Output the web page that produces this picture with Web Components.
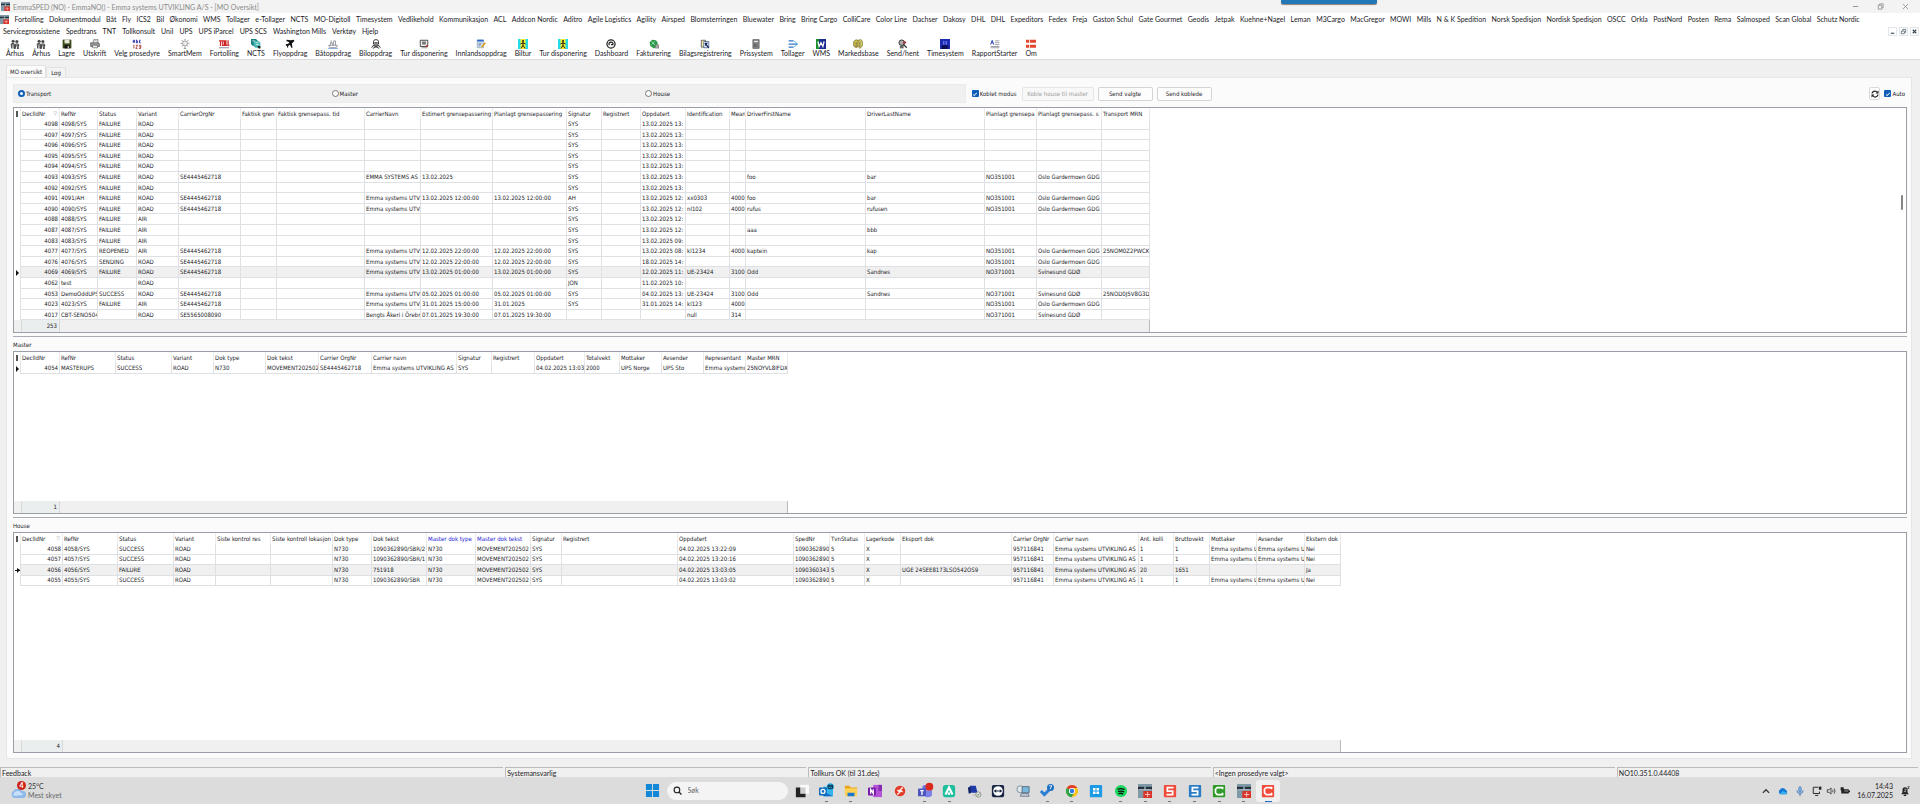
<!DOCTYPE html>
<html lang="no">
<head>
<meta charset="utf-8">
<title>EmmaSPED (NO)</title>
<style>
	html,
	body {
		margin: 0;
		height: 100%;
	}
	body {
		--ui: Lato, "Liberation Sans", sans-serif;
		--grid: "DejaVu Sans Condensed", "Liberation Sans", sans-serif;
		font: 7px/10px var(--ui);
		color: #1b1b1f;
		background: #f0f0f0;
		overflow: hidden;
	}
</style>
</head>
<body>
<emma-app></emma-app>

<script>
const ICONS = {
	emma: `<path fill="#7f9aa6" d="M0 0h16v16H0z"/><path fill="#26303c" d="M0 3h7v3H0zM9 3h7v3H9z"/><path fill="#fff" d="M1 6h14v1H1z" opacity=".5"/><path fill="#d8342c" d="M6 8h10v8H6z"/><path stroke="#f6c9c4" d="M8 12h6M11 9v6"/>`,
	people: `<g fill="#4a4a4a"><circle cx="5" cy="3.500" r="2.500"/><circle cx="11" cy="4" r="2.500"/><path d="M1 8l3-2 3 1 1 2 1-2 4 0 2 3-1 2v4h-3v-4l-1-1-1 5H6l-1-5-1 1v3H2z"/></g><path stroke="#ddd" fill="none" d="M5 8v5M11 8v6M3 9l1 3"/>`,
	save: `<path fill="#3b4a1c" d="M1 1h14v14H1z"/><path fill="#e8e8d8" d="M4 1h8v6H4z"/><path fill="#111" d="M4 10h8v5H4z"/><path fill="#ccc" d="M9 11h2v4H9z"/>`,
	print: `<path fill="#fff" stroke="#555" d="M5 6l1-5h7l-1 5"/><path fill="#9a9a9a" stroke="#444" d="M1 6h13l1 2v4H1z"/><path fill="#eee" stroke="#555" d="M4 10h8v4H4z"/><path stroke="#777" d="M7 3h4"/>`,
	abc: `<path stroke="#33a" stroke-width="1.500" fill="none" d="M2 6V2h2v4M2 4h2M7 1v5h2V3H7M14 2h-2v4h2"/><path stroke="#a44" stroke-width="1.500" fill="none" d="M3 9v6M6 10h3l-3 5h3M11 10h3v5h-3M11 12.500h3"/>`,
	gear: `<circle cx="8" cy="7" r="4" fill="#eee" stroke="#777"/><path stroke="#888" stroke-width="1.500" d="M8 0v2M8 12v2M1 7h2M13 7h2M3 2l2 2M13 2l-2 2M3 12l2-2M13 12l-2-2M6 15h4"/>`,
	toll: `<path stroke="#c22" stroke-width="2" fill="none" d="M0 3h5M2.500 3v8M6 3h3v7H6zM11 2v8h2M14.500 2v8h2"/><path stroke="#446" d="M0 14h16"/>`,
	ncts: `<path fill="#168080" d="M0 0h8l3 3v8H3L0 8z"/><path fill="#49b8b0" d="M4 3h8l3 3v8H7l-3-3z"/><path stroke="#fff" d="M2 3h5M7 6h5M8 9h5"/><path fill="#222" d="M10 11h5v4h-3z"/>`,
	plane: `<path fill="#111" d="M14 1l1 2-4 4 1 7-2 0-2-5-3 2v3H4l-1-3-2-1 1-2h3l2-3-5-2 1-2 6 1z"/>`,
	boat: `<path fill="none" stroke="#667" d="M1 10h14l-2 4H3zM4 10V6h3v4M9 10V3h3v7M5 6V2"/><path stroke="#47c" d="M0 15h16"/>`,
	truck: `<path fill="none" stroke="#333" stroke-width="1.500" d="M4 8V4q0-3 4-3t4 3v4zM5 6h6M1 14l3-4h8l3 4M3 10l10 5M13 10L3 15"/>`,
	screen: `<path fill="#eee" stroke="#444" stroke-width="1.500" d="M2 2h12v10H2z"/><path fill="#777" d="M5 4h6v5H5z"/><path fill="#b33" d="M11 10h3v3h-3z"/><path stroke="#555" d="M4 14h9"/>`,
	note: `<path fill="#cfe2f3" stroke="#79a" d="M2 2h10v12H2z"/><path fill="#36c" d="M2 1h10v3H2z"/><path stroke="#678" d="M4 7h5M4 9h4M4 11h3"/><path stroke="#e59a20" stroke-width="2.500" d="M15 6l-6 7"/>`,
	runner: `<path fill="#22dce8" d="M0 0h16v16H0z"/><path fill="#fff12b" d="M4 0h8v16H4z"/><circle cx="8" cy="3" r="1.500"/><path stroke="#111" stroke-width="1.500" fill="none" d="M8 5v5l-3 5M8 10l3 5M4 8l4-2 4 2"/>`,
	dash: `<circle cx="8" cy="8" r="6.500" fill="#fff" stroke="#222" stroke-width="2"/><path fill="none" stroke="#222" stroke-width="2" d="M5 10q-1-5 3-5t3 4l-3 0"/>`,
	invoice: `<path fill="#2f9a4a" d="M1 5l4-4 6 1 3 4-1 6-5 3-6-4z"/><path stroke="#bfe" fill="none" d="M4 4l6 6M4 9l5-5"/><path fill="#777" d="M10 9h6v6h-6z"/><path stroke="#eee" d="M11 11h4M11 13h4"/>`,
	clip: `<path fill="#f4e8a8" stroke="#222" d="M2 2h7v11H2z"/><path fill="#e8eefc" stroke="#247" d="M6 4h8v10H6z"/><path stroke="#125" stroke-width="2" d="M8 7l6 7"/><path fill="#125" d="M8 6l5 0-5 5z"/>`,
	calc: `<path fill="#888" stroke="#444" d="M3 1h10v14H3z"/><path fill="#e8efe8" d="M5 3h6v2H5z"/><path stroke="#222" stroke-dasharray="1 1" d="M5 8h6M5 10h6M5 12h6"/>`,
	list: `<path stroke="#2f74c0" stroke-width="2" d="M1 3h8M1 8h14M1 13h8"/><path fill="none" stroke="#49a7d8" stroke-width="1.500" d="M10 3l5 5-5 5"/>`,
	wms: `<path fill="#1c2c90" d="M0 0h16v16H0z"/><path fill="#1a8f30" d="M0 0h5v16H0z"/><path fill="none" stroke="#fff" stroke-width="2" d="M3 4l2 8 3-6 3 6 2-8"/>`,
	market: `<path fill="#cfc24a" stroke="#665c10" d="M1 4l4-3 4 2v8l-4 3-4-3z"/><path fill="#d8cf6a" stroke="#665c10" d="M8 2l5-1 2 3v7l-4 4-3-3z"/><path stroke="#445" d="M5 5v8M11 4v9"/>`,
	send: `<circle cx="6" cy="6" r="4.500" fill="#aaa" stroke="#333" stroke-width="1.500"/><path stroke="#333" stroke-width="2" d="M8 8l6 6"/><path fill="#a33" d="M8 4h5v3H8z"/><path fill="#666" d="M3 11h6v4H3z"/>`,
	time: `<path fill="#1c2bb0" d="M0 0h16v16H0z"/><path fill="#0a0f50" d="M3 10h10v6H3z"/><path fill="#6d7bf0" d="M5 3h2v6H5zM9 3h2v6H9z"/>`,
	report: `<path stroke="#2a3fb0" stroke-width="1.500" fill="none" d="M1 9l2.500-7L6 9M2 6h3"/><path stroke="#667" d="M8 3h7M8 6h7M8 9h7M1 12h14M1 14h14"/>`,
	om: `<path fill="#e2452d" d="M0 1h5v5H0zM6 1h10v5H6zM0 9h5v5H0zM6 9h10v5H6z"/><path stroke="#fff" d="M0 7.500h16M5.500 0v16" opacity=".7"/>`,
	refresh: `<path fill="none" stroke="#222" stroke-width="2.500" d="M2 7q1-5 6-5 3 0 5 3M14 9q-1 5-6 5-3 0-5-3"/><path fill="#222" d="M15 1v6H9zM1 15V9h6z"/>`,
	min: `<path stroke="#666" stroke-width="1.500" d="M2 8h12"/>`,
	restore: `<path fill="none" stroke="#777" stroke-width="1.500" d="M3 5h8v9H3zM6 5V2h8v9h-3"/>`,
	close: `<path stroke="#777" stroke-width="1.500" d="M2 2l12 12M14 2L2 14"/>`,
	mdiMin: `<path stroke="#345" stroke-width="2.500" d="M4 12h8"/>`,
	mdiRestore: `<path fill="none" stroke="#345" stroke-width="1.500" d="M3 7h7v6H3zM6 6V3h7v7h-2"/>`,
	mdiClose: `<path stroke="#345" stroke-width="2.500" d="M4 4l8 8M12 4l-8 8"/>`,
	weather: `<path fill="#8cb8ea" d="M4 15a4 4 0 0 1-.500-7A5 5 0 0 1 12 8a3.500 3.500 0 0 1 1 7z"/><path fill="#c9defa" d="M4 13a3 3 0 0 1 1-4 4 4 0 0 1 6 1q2 0 2 2z"/>`,
	windows: `<path fill="#1488d8" d="M1 1h6.500v6.500H1zM8.500 1H15v6.500H8.500zM1 8.500h6.500V15H1zM8.500 8.500H15V15H8.500z"/>`,
	search: `<circle cx="7" cy="7" r="5" fill="none" stroke="#222" stroke-width="2"/><path stroke="#222" stroke-width="2.200" d="M11 11l4 4"/>`,
	taskview: `<path fill="#fafafa" d="M6 1h10v10H6z"/><path fill="#222" d="M1 4h5v7h6v4H1z"/><path fill="#8a8a8a" d="M6 4h6v7H6z" opacity=".4"/>`,
	outlook: `<path fill="#36b5ec" d="M5 3h11v11H5z"/><path fill="#1568c0" d="M5 9l11 5H5z"/><rect y="4" width="9" height="9" rx="1" fill="#0f6cbd"/><circle cx="4.500" cy="8.500" r="2.300" fill="none" stroke="#fff" stroke-width="1.500"/><circle cx="13" cy="3" r="4" fill="#1ea7e0"/><path fill="none" stroke="#123" d="M10.500 1.500h5v3.500h-5zM10.500 2l2.500 1.500L15.500 2"/>`,
	explorer: `<path fill="#e8a51c" d="M1 2h5l2 2h7v3H1z"/><path fill="#ffd257" d="M1 5h14v9H1z"/><path fill="#1a78d0" d="M4 10h8v4H4z"/>`,
	onenote: `<path fill="#b455d8" d="M6 1h10v14H6z"/><path fill="#8a2bb5" d="M12 1h4v7h-4z"/><rect y="4" width="9" height="9" rx="1" fill="#7719aa"/><path fill="none" stroke="#fff" stroke-width="1.500" d="M3 11V6l3 5V6"/>`,
	remote: `<circle cx="8" cy="8" r="6" fill="#e23b2a"/><path fill="none" stroke="#fff" stroke-width="1.500" d="M5 7l3 2-3 3M11 4L8 7l3 2"/>`,
	teams: `<circle cx="8" cy="4" r="3" fill="#6b74e0"/><path fill="#7b83eb" d="M5 7h11v6q-3 3-7 2z"/><rect y="5" width="9" height="9" rx="1" fill="#4b53bc"/><path stroke="#fff" stroke-width="1.500" d="M2.500 7.500h4M4.500 7.500v5"/><circle cx="13" cy="3" r="4.500" fill="#d92a1c"/>`,
	arrowup: `<rect x="1" y="1" width="14" height="14" rx="3" fill="#1bbf9c"/><path fill="none" stroke="#fff" stroke-width="2.500" d="M4 12l4-8 4 8"/><circle cx="8" cy="11" r="1.500" fill="#fff"/>`,
	pc: `<path fill="#1e3aa8" d="M3 2h7l2 8H5z"/><path fill="#122268" d="M1 4l3-1 1 7-3 1z"/><path fill="#ccc" d="M6 11h6l2 3H7z"/><circle cx="13" cy="12" r="3" fill="#e6e6e6" stroke="#888"/><path stroke="#2a8a2a" fill="none" d="M11.500 12l1 1 2-2"/>`,
	teamviewer: `<rect x="1" y="1" width="14" height="14" rx="2" fill="#1a2744"/><circle cx="8" cy="8" r="5.500" fill="#fff"/><path fill="#1a2744" d="M3 8l3-2v1.300h4V6l3 2-3 2V8.700H6V10z"/>`,
	netpc: `<circle cx="5" cy="6" r="4" fill="#dfe6ea" stroke="#789"/><path fill="#78b8dc" stroke="#567" d="M7 3h8v7H7z"/><path fill="#ccd" stroke="#678" d="M6 11h8l1 3H5z"/>`,
	todo: `<path fill="none" stroke="#2a7fd4" stroke-width="3.500" d="M1 8l4 4 8-8"/><circle cx="12" cy="4" r="4" fill="#1d6fc4"/><path stroke="#fff" fill="none" d="M10.500 2h3l-2 4"/>`,
	chrome: `<circle cx="8" cy="8" r="7" fill="#fbc116"/><path fill="#e33b2e" d="M8 8L2 4.500A7 7 0 0 1 14 4.500H8z"/><path fill="#2ba24c" d="M8 8L2 4.500A7 7 0 0 0 7.500 15l3-5z"/><circle cx="8" cy="8" r="3.500" fill="#fff"/><circle cx="8" cy="8" r="2.600" fill="#2f7de1"/>`,
	store: `<rect x="1" y="1" width="14" height="14" rx="1" fill="#1b9be6"/><path fill="#fff" d="M4.500 4.500h3v3h-3zM8.500 4.500h3v3h-3zM4.500 8.500h3v3h-3zM8.500 8.500h3v3h-3z"/>`,
	spotify: `<circle cx="8" cy="8" r="7" fill="#1ed760"/><path fill="none" stroke="#111" stroke-width="1.500" d="M4 6q4-1.500 8 .5M4.500 8.500q4-1 7 .5M5 11q3-1 5.500.5"/>`,
	snagitRed: `<rect x="1" y="1" width="14" height="14" rx="1" fill="#f04a3a"/><path fill="none" stroke="#fff" stroke-width="2" d="M12 4H5v4h6v4H4"/>`,
	snagitBlue: `<rect x="1" y="1" width="14" height="14" rx="1" fill="#2b7cc4"/><path fill="none" stroke="#fff" stroke-width="2" d="M12 4H5v4h6v4H4"/>`,
	camGreen: `<rect x="1" y="1" width="14" height="14" rx="1" fill="#2f9a2a"/><path fill="none" stroke="#fff" stroke-width="2" d="M12 6V4H6L4 6v4l2 2h6v-2"/>`,
	camRed: `<rect x="1" y="1" width="14" height="14" rx="1" fill="#f04a3a"/><path fill="none" stroke="#fff" stroke-width="2" d="M12 6V4H6L4 6v4l2 2h6v-2"/>`,
	chevron: `<path fill="none" stroke="#333" stroke-width="2" d="M3 11l5-5 5 5"/>`,
	cloud: `<path fill="#1479d0" d="M4 13a4 4 0 0 1-1-7A5 5 0 0 1 12 6a4 4 0 0 1 1 7z"/><path fill="#38b0ee" d="M2 13l6-5 7 3-1 2z"/>`,
	mic: `<rect x="6" y="1" width="4" height="9" rx="2" fill="#7fb0e0" stroke="#3a76b8"/><path fill="none" stroke="#3a76b8" stroke-width="1.500" d="M3 7q0 5 5 5t5-5M8 12v4"/>`,
	monitor: `<path fill="none" stroke="#222" stroke-width="1.500" d="M10 2H2v10h10V9M5 15h5"/><path fill="#222" d="M11 1h4v5h-4z"/>`,
	speaker: `<path fill="none" stroke="#333" stroke-width="1.300" d="M2 6h3l3-3v10L5 10H2zM10.500 6q1.500 2 0 4M13 4q3 4 0 8"/>`,
	battery: `<path fill="#222" d="M2 5h12v7H2zM14 7h2v3h-2z"/><path fill="#222" d="M1 2h5v5H1z"/><path stroke="#ddd" d="M7 8h6" />`,
	bell: `<path fill="#222" d="M2 13l2-3V5q0-3 4-3t4 3v5l2 3zM6 14h4v2H6z"/><path stroke="#ddd" fill="none" d="M7 5h3l-3 4h3"/><path stroke="#222" fill="none" d="M12 1h3l-3 3h3"/>`,
};

const MENU_ROWS = [
	["Fortolling", "Dokumentmodul", "Båt", "Fly", "ICS2", "Bil", "Økonomi", "WMS", "Tollager", "e-Tollager", "NCTS", "MO-Digitoll", "Timesystem", "Vedlikehold", "Kommunikasjon", "ACL", "Addcon Nordic", "Aditro", "Agile Logistics", "Agility", "Airsped", "Blomsterringen", "Bluewater", "Bring", "Bring Cargo", "ColliCare", "Color Line", "Dachser", "Dakosy", "DHL", "DHL", "Expeditors", "Fedex", "Freja", "Gaston Schul", "Gate Gourmet", "Geodis", "Jetpak", "Kuehne+Nagel", "Leman", "M3Cargo", "MacGregor", "MOWI", "Mills", "N & K Spedition", "Norsk Spedisjon", "Nordisk Spedisjon", "OSCC", "Orkla", "PostNord", "Posten", "Rema", "Salmosped", "Scan Global", "Schutz Nordic"],
	["Servicegrossistene", "Spedtrans", "TNT", "Tollkonsult", "Unil", "UPS", "UPS iParcel", "UPS SCS", "Washington Mills", "Verktøy", "Hjelp"],
];

const TOOLS = [
	["people", "Århus"], ["people", "Århus"], ["save", "Lagre"], ["print", "Utskrift"],
	["abc", "Velg prosedyre"], ["gear", "SmartMem"], ["toll", "Fortolling"], ["ncts", "NCTS"],
	["plane", "Flyoppdrag"], ["boat", "Båtoppdrag"], ["truck", "Biloppdrag"],
	["screen", "Tur disponering"], ["note", "Innlandsoppdrag"], ["runner", "Biltur"],
	["runner", "Tur disponering"], ["dash", "Dashboard"], ["invoice", "Fakturering"],
	["clip", "Bilagsregistrering"], ["calc", "Prissystem"], ["list", "Tollager"],
	["wms", "WMS"], ["market", "Markedsbase"], ["send", "Send/hent"],
	["time", "Timesystem"], ["report", "RapportStarter"], ["om", "Om"],
];

// name of the app, icon, running or not
const APPS = [
	["Oppgavevisning", "taskview", 0], ["Outlook", "outlook", 1], ["Filutforsker", "explorer", 1],
	["OneNote", "onenote", 0], ["Remote", "remote", 0], ["Teams", "teams", 1],
	["Assistent", "arrowup", 1], ["Eksternt skrivebord", "pc", 0], ["TeamViewer", "teamviewer", 0],
	["Nettverk", "netpc", 0], ["To Do", "todo", 1], ["Chrome", "chrome", 1], ["Store", "store", 0],
	["Spotify", "spotify", 1], ["EmmaSPED", "emma", 1], ["Snagit", "snagitRed", 1],
	["Snagit Editor", "snagitBlue", 1], ["Camtasia", "camGreen", 1], ["EmmaSPED 2", "emma", 1],
	["Camtasia Recorder", "camRed", 2],
];

const GRIDS = {
	transport: {
		columns: [["DeclIdNr", 39, "sort"], ["RefNr", 38], ["Status", 39], ["Variant", 42], ["CarrierOrgNr", 62], ["Faktisk gren", 36], ["Faktisk grensepass. tid", 88], ["CarrierNavn", 56], ["Estimert grensepassering", 72], ["Planlagt grensepassering", 74], ["Signatur", 35], ["Registrert", 39], ["Oppdatert", 45], ["Identification", 44], ["Mean", 16], ["DriverFirstName", 120], ["DriverLastName", 119], ["Planlagt grensepa", 52], ["Planlagt grensepass. s", 65], ["Transport MRN", 48]],
		rows: [
			"4098|4098/SYS|FAILURE|ROAD|||||||SYS||13.02.2025 13:",
			"4097|4097/SYS|FAILURE|ROAD|||||||SYS||13.02.2025 13:",
			"4096|4096/SYS|FAILURE|ROAD|||||||SYS||13.02.2025 13:",
			"4095|4095/SYS|FAILURE|ROAD|||||||SYS||13.02.2025 13:",
			"4094|4094/SYS|FAILURE|ROAD|||||||SYS||13.02.2025 13:",
			"4093|4093/SYS|FAILURE|ROAD|SE4445462718|||EMMA SYSTEMS AS|13.02.2025||SYS||13.02.2025 13:|||foo|bar|NO351001|Oslo Gardermoen GDG",
			"4092|4092/SYS|FAILURE|ROAD|||||||SYS||13.02.2025 13:",
			"4091|4091/AH|FAILURE|ROAD|SE4445462718|||Emma systems UTVI|13.02.2025 12:00:00|13.02.2025 12:00:00|AH||13.02.2025 12:|xx0303|4000|foo|bar|NO351001|Oslo Gardermoen GDG",
			"4090|4090/SYS|FAILURE|ROAD|SE4445462718|||Emma systems UTVI|||SYS||13.02.2025 12:|nl102|4000|rufus|rufusen|NO351001|Oslo Gardermoen GDG",
			"4088|4088/SYS|FAILURE|AIR|||||||SYS||13.02.2025 12:",
			"4087|4087/SYS|FAILURE|AIR|||||||SYS||13.02.2025 12:|||aaa|bbb",
			"4083|4083/SYS|FAILURE|AIR|||||||SYS||13.02.2025 09:",
			"4077|4077/SYS|REOPENED|AIR|SE4445462718|||Emma systems UTVI|12.02.2025 22:00:00|12.02.2025 22:00:00|SYS||13.02.2025 08:|kl1234|4000|kaptein|kap|NO351001|Oslo Gardermoen GDG|25NOM0Z2PWCK",
			"4076|4076/SYS|SENDING|ROAD|SE4445462718|||Emma systems UTVI|12.02.2025 22:00:00|12.02.2025 22:00:00|SYS||18.02.2025 14:|||||NO351001|Oslo Gardermoen GDG",
			"4069|4069/SYS|FAILURE|ROAD|SE4445462718|||Emma systems UTVI|13.02.2025 01:00:00|13.02.2025 01:00:00|SYS||12.02.2025 11:|UE-23424|3100|Odd|Sandnes|NO371001|Svinesund GDØ",
			"4062|test||ROAD|||||||JON||11.02.2025 10:",
			"4053|DemoOddUPS|SUCCESS|ROAD|SE4445462718|||Emma systems UTVI|05.02.2025 01:00:00|05.02.2025 01:00:00|SYS||04.02.2025 13:|UE-23424|3100|Odd|Sandnes|NO371001|Svinesund GDØ|25NOD0J5V8G3D",
			"4023|4023/SYS|FAILURE|AIR|SE4445462718|||Emma systems UTVI|31.01.2025 15:00:00|31.01.2025|SYS||31.01.2025 14:|kl123|4000|||NO351001|Oslo Gardermoen GDG",
			"4017|CBT-SENO504||ROAD|SE5565008090|||Bengts Åkeri i Örebr|07.01.2025 19:30:00|07.01.2025 19:30:00||||null|314|||NO371001|Svinesund GDØ",
		],
		current: 14,
		shaded: true,
		total: 253,
	},
	master: {
		columns: [["DeclIdNr", 39], ["RefNr", 56], ["Status", 56], ["Variant", 42], ["Dok type", 52], ["Dok tekst", 53], ["Carrier OrgNr", 53], ["Carrier navn", 85], ["Signatur", 35], ["Registrert", 43], ["Oppdatert", 50], ["Totalvekt", 35], ["Mottaker", 42], ["Avsender", 42], ["Representant", 42], ["Master MRN", 42]],
		rows: [
			"4054|MASTERUPS|SUCCESS|ROAD|N730|MOVEMENT202502|SE4445462718|Emma systems UTVIKLING AS|SYS||04.02.2025 13:03|2000|UPS Norge|UPS Sto|Emma systems|25NOYVL8IFDX",
		],
		current: 0,
		total: 1,
	},
	house: {
		columns: [["DeclIdNr", 42, "sort"], ["RefNr", 55], ["Status", 56], ["Variant", 42], ["Siste kontrol res", 55], ["Siste kontroll lokasjon", 62], ["Dok type", 39], ["Dok tekst", 55], ["Master dok type", 49, "link"], ["Master dok tekst", 55, "link"], ["Signatur", 31], ["Registrert", 116], ["Oppdatert", 116], ["SpedNr", 36], ["TvnStatus", 35], ["Lagerkode", 36], ["Eksport dok", 111], ["Carrier OrgNr", 42], ["Carrier navn", 85], ["Ant. kolli", 35], ["Bruttovekt", 36], ["Mottaker", 47], ["Avsender", 48], ["Ekstern dok", 36]],
		rows: [
			"4058|4058/SYS|SUCCESS|ROAD|||N730|1090362890/SBR/2|N730|MOVEMENT202502|SYS||04.02.2025 13:22:09|1090362890|5|X||957116841|Emma systems UTVIKLING AS|1|1|Emma systems U|Emma systems U|Nei",
			"4057|4057/SYS|SUCCESS|ROAD|||N730|1090362890/SBR/1|N730|MOVEMENT202502|SYS||04.02.2025 13:20:16|1090362890|5|X||957116841|Emma systems UTVIKLING AS|1|1|Emma systems U|Emma systems U|Nei",
			"4056|4056/SYS|FAILURE|ROAD|||N730|751918|N730|MOVEMENT202502|SYS||04.02.2025 13:03:05|1090360343|5|X|UGE 24SEE8173LSO542OS9|957116841|Emma systems UTVIKLING AS|20|1651|||Ja",
			"4055|4055/SYS|SUCCESS|ROAD|||N730|1090362890/SBR|N730|MOVEMENT202502|SYS||04.02.2025 13:03:02|1090362890|5|X||957116841|Emma systems UTVIKLING AS|1|1|Emma systems U|Emma systems U|Nei",
		],
		current: 2,
		shaded: true,
		marker: "arrow",
		total: 4,
	},
};

const BUTTON_RESET = `
	button {
		appearance: none;
		margin: 0;
		padding: 0;
		border: 0;
		background: none;
		color: inherit;
		font: inherit;
		white-space: nowrap;
	}
`;

function define(name, html) {
	customElements.define(
		name,
		class extends HTMLElement {
			constructor() {
				super();
				this.attachShadow({ mode: "open" });
			}

			connectedCallback() {
				this.shadowRoot.innerHTML = typeof html === "function" ? html(this) : html;
			}
		},
	);
}

define("emma-icon", (el) => `
	<style>
		:host { display: block; flex: none; width: var(--size, 10px); height: var(--size, 10px); }
		svg { display: block; width: 100%; height: 100%; overflow: visible; }
	</style>
	<svg viewBox="0 0 16 16" aria-hidden="true">${ICONS[el.getAttribute("name")] || ""}</svg>
`);

define("title-bar", `
	<style>
		${BUTTON_RESET}
		:host { display: flex; align-items: center; height: 13px; background: #f3f3f3; color: #8a8a8a; padding-left: 1px; }
		emma-icon { --size: 9px; }
		.caption { flex: 1; padding-left: 3px; }
		.controls { display: flex; gap: 18px; padding-right: 11px; }
		.controls emma-icon { --size: 7px; }
	</style>
	<emma-icon name="emma"></emma-icon>
	<span class="caption"><slot></slot></span>
	<div class="controls">
		<button aria-label="Minimer"><emma-icon name="min"></emma-icon></button>
		<button aria-label="Gjenopprett"><emma-icon name="restore"></emma-icon></button>
		<button aria-label="Lukk"><emma-icon name="close"></emma-icon></button>
	</div>
`);

define("menu-bar", `
	<style>
		${BUTTON_RESET}
		:host { display: block; background: #fff; }
		nav { display: flex; align-items: center; height: 12px; }
		.first { justify-content: space-between; padding-right: 60px; }
		.second { gap: 6px; padding: 0 1px 0 3px; }
		emma-icon { --size: 9px; }
		.mdi { display: flex; gap: 2px; margin-left: auto; }
		.mdi emma-icon { --size: 7px; border: 1px solid #e2e6ea; }
	</style>
	<nav class="first">
		<emma-icon name="emma"></emma-icon>
		${MENU_ROWS[0].map((text) => `<button>${text.replace("&", "&amp;")}</button>`).join("")}
	</nav>
	<nav class="second">
		${MENU_ROWS[1].map((text) => `<button>${text}</button>`).join("")}
		<div class="mdi">
			<button aria-label="Minimer vindu"><emma-icon name="mdiMin"></emma-icon></button>
			<button aria-label="Gjenopprett vindu"><emma-icon name="mdiRestore"></emma-icon></button>
			<button aria-label="Lukk vindu"><emma-icon name="mdiClose"></emma-icon></button>
		</div>
	</nav>
`);

define("tool-bar", `
	<style>
		${BUTTON_RESET}
		:host { display: flex; gap: 8px; height: 22px; padding-left: 6px; background: #fff; border-bottom: 1px solid #dcdcdc; }
		button { display: flex; flex-direction: column; align-items: center; padding-top: 2px; line-height: 9px; }
	</style>
	${TOOLS.map(([icon, text]) => `<button><emma-icon name="${icon}"></emma-icon>${text}</button>`).join("")}
`);

define("tab-strip", `
	<style>
		${BUTTON_RESET}
		:host { display: flex; align-items: flex-end; height: 17px; padding-left: 6px; font: 6px/10px var(--grid); }
		button { height: 10px; padding: 0 4px; background: #f3f3f3; border: 1px solid #e2e2e2; border-bottom: 0; line-height: 9px; }
		button[aria-selected="true"] { height: 12px; background: #fbfbfb; padding: 0 3px; }
	</style>
	<button role="tab" aria-selected="true">MO oversikt</button>
	<button role="tab" aria-selected="false">Log</button>
`);

define("option-bar", `
	<style>
		${BUTTON_RESET}
		:host { display: flex; align-items: center; height: 19px; font: 6px/10px var(--grid); }
		fieldset {
			display: grid;
			grid-template-columns: repeat(3, 1fr);
			align-items: center;
			box-sizing: border-box;
			width: 50.3%;
			height: 19px;
			margin: 0;
			padding: 0 6px 0 4px;
			border: 1px solid #ebebeb;
			background: #f0f0f0;
		}
		label { display: flex; align-items: center; gap: 1px; }
		input { appearance: none; margin: 0; width: 7px; height: 7px; box-sizing: border-box; }
		input[type="radio"] { border: 1px solid #777; border-radius: 50%; background: #fdfdfd; }
		input[type="radio"]:checked { border: 2px solid #0f5fb8; }
		input[type="checkbox"] { border-radius: 1px; background: #0f5fb8; display: grid; place-items: center; }
		input[type="checkbox"]::after { content: ""; width: 3px; height: 1px; border: solid #cfe2f6; border-width: 0 0 1px 1px; transform: rotate(-45deg); }
		.linked { margin: 0 5px 0 6px; }
		.push { box-sizing: border-box; width: 55px; height: 14px; margin-right: 4px; border: 1px solid #d4d4d4; border-radius: 2px; background: #fdfdfd; }
		.push.wide { width: 72px; }
		.push:disabled { border-color: #e6e6e6; background: #f8f8f8; color: #9c9c9c; }
		.end { display: flex; align-items: center; gap: 4px; margin-left: auto; padding-right: 2px; }
		.reload { display: grid; place-items: center; box-sizing: border-box; width: 11px; height: 13px; border: 1px solid #dadada; border-radius: 2px; background: #fdfdfd; }
		emma-icon { --size: 8px; }
	</style>
	<fieldset aria-label="Nivå">
		<label><input type="radio" name="level" checked>Transport</label>
		<label><input type="radio" name="level">Master</label>
		<label><input type="radio" name="level">House</label>
	</fieldset>
	<label class="linked"><input type="checkbox" checked>Koblet modus</label>
	<button class="push wide" disabled>Koble house til master</button>
	<button class="push">Send valgte</button>
	<button class="push">Send koblede</button>
	<div class="end">
		<button class="reload" aria-label="Oppdater"><emma-icon name="refresh"></emma-icon></button>
		<label><input type="checkbox" checked>Auto</label>
	</div>
`);

function gridHtml(el) {
	const grid = GRIDS[el.getAttribute("source")];
	const width = grid.columns.reduce((sum, column) => sum + column[1], 7);
	const cols = grid.columns.map((column) => `<col style="width:${column[1]}px">`).join("");
	const heads = grid.columns
		.map(([text, , kind]) => `<th class="${kind || ""}">${text}</th>`)
		.join("");
	const body = grid.rows
		.map((line, index) => {
			const values = line.split("|");
			const cells = grid.columns.map((_, i) => `<td>${values[i] || ""}</td>`).join("");
			const current = index === grid.current;
			const mark = current ? `<i class="${grid.marker || "play"}"></i>` : "";
			const shade = current && grid.shaded ? "current" : "";
			return `<tr class="${shade}"><td class="mark">${mark}</td>${cells}</tr>`;
		})
		.join("");
	return `
		<style>
			:host { display: flex; flex-direction: column; position: relative; box-sizing: border-box; min-height: 0; border: 1px solid #9a9ea6; background: #fff; font: 6px/9px var(--grid); overflow: hidden; }
			table { table-layout: fixed; border-collapse: separate; border-spacing: 0; width: ${width}px; }
			th, td { box-sizing: border-box; padding: 0 0 0 1px; overflow: hidden; white-space: nowrap; text-align: left; font-weight: 400; }
			th { height: 11px; padding-top: 1px; border-right: 1px solid #ececec; vertical-align: top; }
			td { height: 10px; border-right: 1px solid #dfe0e3; border-bottom: 1px solid #dfe0e3; line-height: 8px; }
			tr:nth-child(5n + 1) td, tr:nth-child(5n + 3) td, tr:nth-child(5n) td { height: 11px; }
			td:nth-child(2) { padding-right: 1px; text-align: right; }
			.current td { background: #f0f0f0; }
			td.mark { padding: 0; border-bottom: 0; background: #fff; }
			th:first-child { padding: 3px 0 0; }
			th:first-child::before { content: ""; display: block; width: 2px; height: 6px; margin: 0 auto; background: #555; }
			.link { color: #2020d8; }
			.sort::after { content: "▽"; float: right; padding-right: 2px; color: #888; font-size: 5px; }
			i { display: block; width: 0; height: 0; margin: 0 auto; border: solid transparent; border-width: 3px 0 3px 3px; border-left-color: #111; }
			i.arrow { width: 5px; height: 1px; border: 0; background: #111; position: relative; }
			i.arrow::after { content: ""; position: absolute; right: 0; top: -2px; border: solid transparent; border-width: 2px 0 3px 3px; border-left-color: #111; }
			footer { display: flex; box-sizing: border-box; width: ${width}px; height: 12px; margin-top: auto; border-right: 1px solid #b8bbc0; background: #f0f0f0; line-height: 12px; }
			output { box-sizing: border-box; width: ${grid.columns[0][1]}px; margin-left: 7px; padding-right: 2px; border: solid #d6d8da; border-width: 0 1px; background: #ebeeee; text-align: right; }
			.thumb { position: absolute; right: 3px; top: 39%; width: 2px; height: 15px; border-radius: 1px; background: #858585; }
		</style>
		<table>
			<colgroup><col style="width:7px">${cols}</colgroup>
			<thead><tr><th></th>${heads}</tr></thead>
			<tbody>${body}</tbody>
		</table>
		<footer><output>${grid.total}</output></footer>
		${el.hasAttribute("scrolls") ? `<div class="thumb"></div>` : ""}
	`;
}

define("data-grid", gridHtml);

define("grid-section", `
	<style>
		:host { display: flex; flex-direction: column; min-height: 0; }
		.splitter { height: 2px; margin-top: 3px; border-top: 1px solid #a9acb2; box-sizing: border-box; }
		h2 { margin: 0; font: 6px/13px var(--grid); }
		::slotted(data-grid) { flex: 1; }
	</style>
	<div class="splitter"></div>
	<h2><slot name="heading"></slot></h2>
	<slot></slot>
`);

define("status-bar", `
	<style>
		:host { display: grid; grid-template-columns: 5fr 3fr 4fr 4fr 3fr; height: 10px; font: 7px/10px var(--ui); }
		::slotted(span) { padding-left: 1px; border-top: 1px solid #bcbcbc; border-left: 1px solid #bcbcbc; margin-right: 2px; }
	</style>
	<slot></slot>
`);

define("task-bar", `
	<style>
		${BUTTON_RESET}
		:host { display: grid; grid-template-columns: 1fr auto 1fr; align-items: center; height: 27px; background: #dcdcdc; font: 7px/9px var(--ui); }
		.weather { display: flex; align-items: center; gap: 2px; padding-left: 10px; text-align: left; color: #333; }
		.weather small { display: block; font-size: 7px; color: #666; }
		.cloud { position: relative; --size: 16px; }
		.badge { position: absolute; right: 0; top: -2px; width: 9px; height: 9px; border-radius: 50%; background: #cc2418; color: #fff; line-height: 9px; text-align: center; }
		.middle { display: flex; align-items: center; gap: 2px; }
		.start { display: grid; place-items: center; width: 25px; --size: 15px; }
		.search { display: flex; align-items: center; box-sizing: border-box; width: 121px; height: 18px; gap: 6px; padding: 0 6px; border-radius: 9px; background: #f4f4f4; --size: 9px; }
		input { flex: 1; min-width: 0; padding: 0; border: 0; outline: 0; background: none; font: 7px/9px var(--ui); }
		input::placeholder { color: #666; }
		.apps { display: flex; width: 491px; --size: 14px; }
		.app { flex: 1; display: grid; justify-items: center; align-content: center; position: relative; height: 22px; border-radius: 3px; }
		.running::after { content: ""; position: absolute; bottom: 0; width: 3px; height: 1px; background: #777; }
		.active { background: #f0f0f0; }
		.active::after { width: 7px; background: #1a6cc8; }
		.tray { display: flex; align-items: center; justify-content: flex-end; gap: 7px; padding-right: 10px; --size: 10px; color: #222; }
		.tray .group { display: flex; gap: 4px; }
		time { text-align: right; }
	</style>
	<button class="weather">
		<span class="cloud"><emma-icon name="weather"></emma-icon><b class="badge">4</b></span>
		<span>25°C<small>Mest skyet</small></span>
	</button>
	<div class="middle">
		<button class="start" aria-label="Start"><emma-icon name="windows"></emma-icon></button>
		<label class="search"><emma-icon name="search"></emma-icon><input type="search" placeholder="Søk" aria-label="Søk"></label>
		<div class="apps">
			${APPS.map(([name, icon, state]) => `<button class="app ${["", "running", "running active"][state]}" aria-label="${name}"><emma-icon name="${icon}"></emma-icon></button>`).join("")}
		</div>
	</div>
	<div class="tray">
		<emma-icon name="chevron"></emma-icon>
		<emma-icon name="cloud"></emma-icon>
		<emma-icon name="mic"></emma-icon>
		<div class="group">
			<emma-icon name="monitor"></emma-icon>
			<emma-icon name="speaker"></emma-icon>
			<emma-icon name="battery"></emma-icon>
		</div>
		<time>14:43<br>16.07.2025</time>
		<emma-icon name="bell"></emma-icon>
	</div>
`);

define("emma-app", `
	<style>
		:host { display: flex; flex-direction: column; height: 100vh; }
		main { flex: 1; display: flex; flex-direction: column; min-height: 0; box-sizing: border-box; margin: 0 8px 8px 6px; padding: 6px 4px 5px 6px; border: 1px solid #e6e6e6; background: #fbfbfb; }
		option-bar { margin-bottom: 4px; }
		.transport { flex: 225 1 0; }
		.master { flex: 181 1 0; }
		.house { flex: 240 1 0; }
		.drawer { position: absolute; top: 0; left: 66.7%; width: 96px; height: 4px; border-radius: 0 0 2px 2px; background: #2277b8; box-shadow: 0 1px 1px #8a7f78; }
	</style>
	<title-bar>EmmaSPED (NO) - EmmaNO() - Emma systems UTVIKLING A/S - [MO Oversikt]</title-bar>
	<menu-bar></menu-bar>
	<tool-bar></tool-bar>
	<tab-strip></tab-strip>
	<main>
		<option-bar></option-bar>
		<data-grid class="transport" source="transport" scrolls></data-grid>
		<grid-section class="master">
			<span slot="heading">Master</span>
			<data-grid source="master"></data-grid>
		</grid-section>
		<grid-section class="house">
			<span slot="heading">House</span>
			<data-grid source="house"></data-grid>
		</grid-section>
	</main>
	<status-bar>
		<span>Feedback</span>
		<span>Systemansvarlig</span>
		<span>Tollkurs OK (til 31.des)</span>
		<span>&lt;Ingen prosedyre valgt&gt;</span>
		<span>NO10.351.0.44408</span>
	</status-bar>
	<task-bar></task-bar>
	<div class="drawer"></div>
`);
</script>
</body>
</html>
